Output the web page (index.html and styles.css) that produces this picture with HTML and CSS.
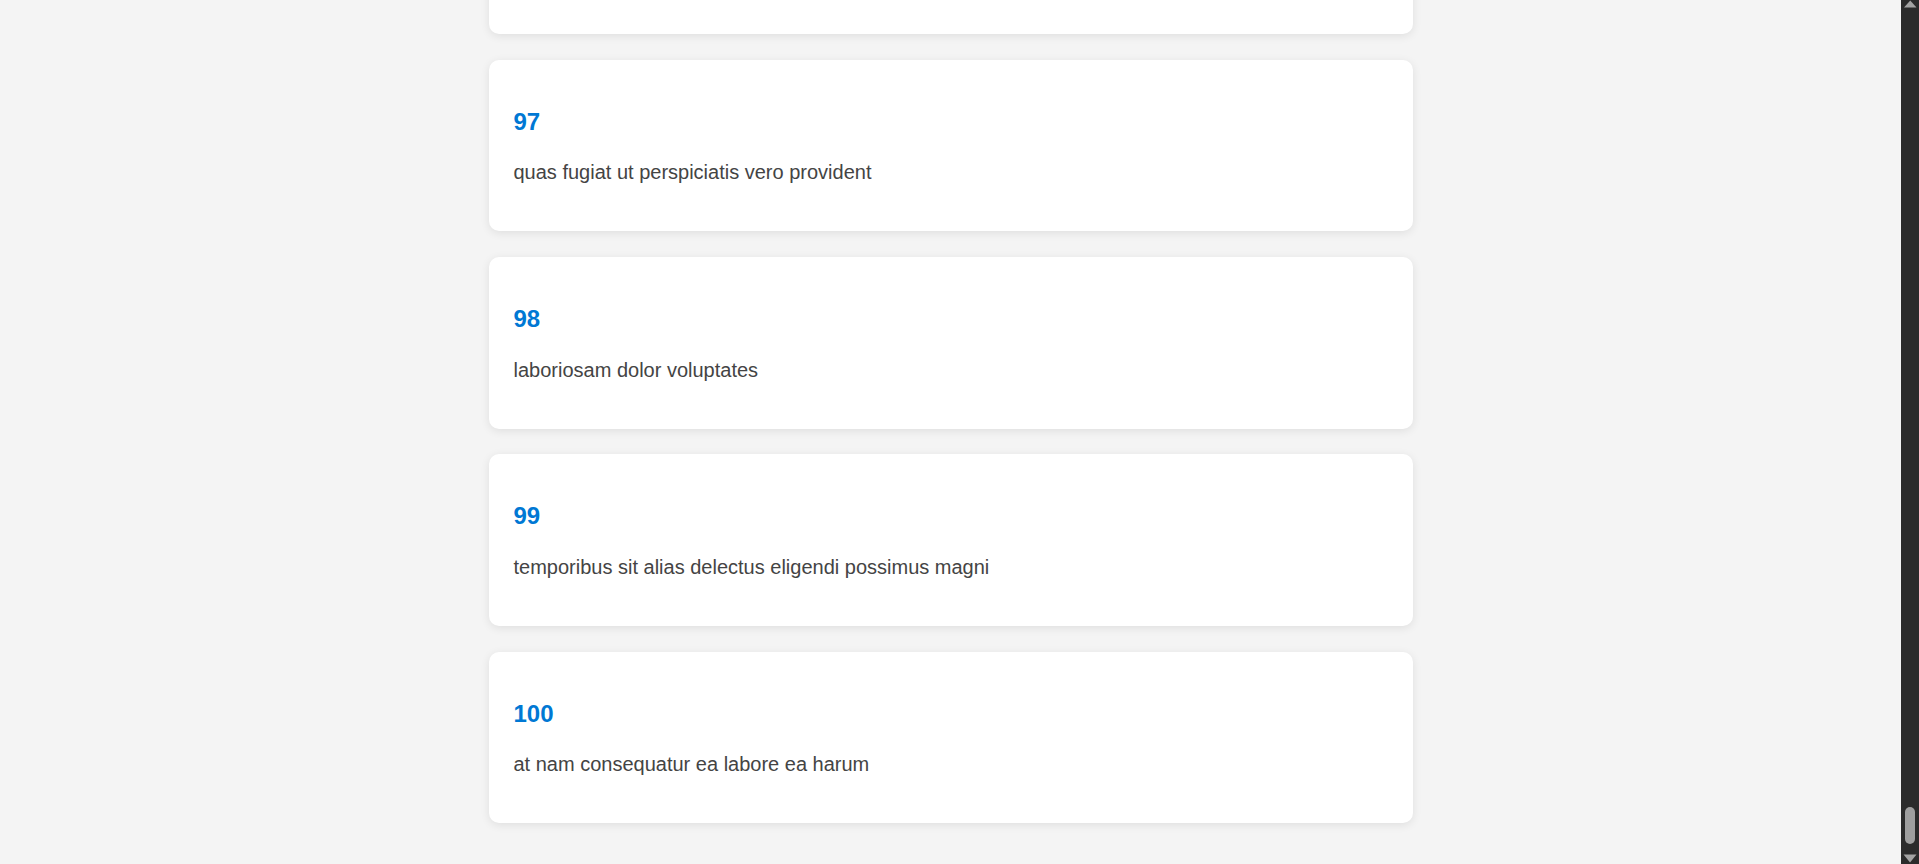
FILE: index.html
```html
<!DOCTYPE html>
<html lang="en">
<head>
<meta charset="utf-8">
<title>Posts</title>
<link rel="stylesheet" href="styles.css">
</head>
<body>
<div class="page">
  <main class="feed">
    <article class="card card-clipped" aria-hidden="true"></article>
    <article class="card">
      <h2 class="card-id">97</h2>
      <p class="card-text">quas fugiat ut perspiciatis vero provident</p>
    </article>
    <article class="card">
      <h2 class="card-id">98</h2>
      <p class="card-text">laboriosam dolor voluptates</p>
    </article>
    <article class="card">
      <h2 class="card-id">99</h2>
      <p class="card-text">temporibus sit alias delectus eligendi possimus magni</p>
    </article>
    <article class="card">
      <h2 class="card-id">100</h2>
      <p class="card-text">at nam consequatur ea labore ea harum</p>
    </article>
  </main>
  <div class="scrollbar" aria-hidden="true">
    <svg class="sb-arrow sb-up" width="18" height="8" viewBox="0 0 18 8"><polygon points="3,7.5 15.5,7.5 9.25,0.5" fill="#a3a3a3"/></svg>
    <div class="sb-track"><div class="sb-thumb"></div></div>
    <svg class="sb-arrow sb-down" width="18" height="10" viewBox="0 0 18 10"><polygon points="2.5,0.5 15.5,0.5 9,8.5" fill="#a3a3a3"/></svg>
  </div>
</div>
</body>
</html>
```
FILE: styles.css
```css
html, body {
  margin: 0;
  height: 100%;
}

body {
  background: #f4f4f4;
  font-family: "Liberation Sans", Arial, sans-serif;
  overflow: hidden;
}

.page {
  display: flex;
  height: 100vh;
}

.feed {
  flex: 1;
  min-width: 0;
  display: flex;
  flex-direction: column;
  justify-content: flex-end;
  align-items: center;
  gap: 25.5px;
  padding-bottom: 40.7px;
  overflow: hidden;
}

.card {
  flex-shrink: 0;
  width: 924px;
  box-sizing: border-box;
  padding: 25px;
  background: #ffffff;
  border-radius: 10px;
  box-shadow: 0 2px 10px rgba(0, 0, 0, 0.09);
}

.card-clipped {
  height: 172px;
}

.card-id {
  margin: 20px 0;
  font-size: 24px;
  line-height: 33.6px;
  font-weight: bold;
  color: #0078d4;
}

.card-text {
  margin: 20px 0;
  font-size: 20px;
  line-height: 28.2px;
  color: #444444;
}

.scrollbar {
  flex: 0 0 18px;
  display: flex;
  flex-direction: column;
  background: #2b2b2b;
}

.sb-arrow {
  display: block;
  flex-shrink: 0;
}

.sb-track {
  flex: 1;
  display: flex;
  flex-direction: column;
  justify-content: flex-end;
  align-items: center;
  padding-bottom: 10.3px;
}

.sb-thumb {
  width: 10px;
  height: 37px;
  border-radius: 5px;
  background: #9f9f9f;
}
```
